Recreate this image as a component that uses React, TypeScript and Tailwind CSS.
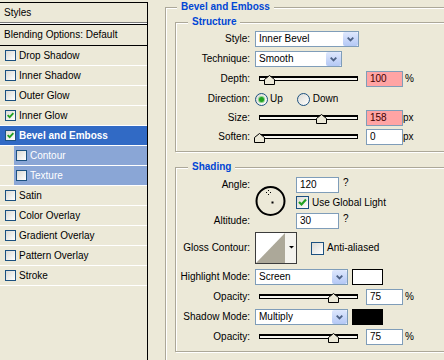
import React from 'react';
import clsx from 'clsx';

const styleRows: { name: string; checked?: boolean; sel?: 'main' | 'sub' }[] = [
  { name: 'Drop Shadow' },
  { name: 'Inner Shadow' },
  { name: 'Outer Glow' },
  { name: 'Inner Glow', checked: true },
  { name: 'Bevel and Emboss', checked: true, sel: 'main' },
  { name: 'Contour', sel: 'sub' },
  { name: 'Texture', sel: 'sub' },
  { name: 'Satin' },
  { name: 'Color Overlay' },
  { name: 'Gradient Overlay' },
  { name: 'Pattern Overlay' },
  { name: 'Stroke' },
];

const CheckBox = ({ small, checked }: { small?: boolean; checked?: boolean }) => (
  <span
    className={clsx(
      'flex shrink-0 items-center justify-center border border-[#1c5180] bg-linear-to-br from-[#dcdbd5] to-white',
      small ? 'h-[11px] w-[11px]' : 'h-[13px] w-[13px]'
    )}
  >
    {checked && (
      <svg width={small ? 9 : 11} height={small ? 9 : 11} viewBox="0 0 11 11">
        <path d="M2 5 L4.5 7.5 L9 2.5" stroke="#21a121" strokeWidth="2.2" fill="none" />
      </svg>
    )}
  </span>
);

const Radio = ({ on }: { on?: boolean }) => (
  <span className="flex h-[13px] w-[13px] shrink-0 items-center justify-center rounded-full border border-[#1c5180] bg-linear-to-br from-[#dcdbd5] to-white">
    {on && <span className="h-[5px] w-[5px] rounded-full bg-[#21a121] shadow-[0_0_0_1px_#8fd28f]" />}
  </span>
);

const Select = ({ value, w }: { value: string; w: string }) => (
  <div className={clsx('flex h-[16px] shrink-0 items-center border border-[#7f9db9] bg-white', w)}>
    <span className="flex-1 pl-[3px] leading-[14px]">{value}</span>
    <span className="flex h-[14px] w-[15px] items-center justify-center rounded-[2px] bg-linear-to-b from-[#dfe8fd] to-[#b4c8f5]">
      <svg width="7" height="5" viewBox="0 0 7 5">
        <path d="M0.7 0.7 L3.5 3.5 L6.3 0.7" stroke="#4d6185" strokeWidth="1.8" fill="none" />
      </svg>
    </span>
  </div>
);

const Field = ({ value, pink, wide }: { value: string; pink?: boolean; wide?: boolean }) => (
  <div
    className={clsx(
      'h-[16px] shrink-0 border border-[#7f9db9] pl-[3px] leading-[14px]',
      wide ? 'w-[43px]' : 'w-[37px]',
      pink ? 'bg-[#ffa4a4] text-[#400000]' : 'bg-white'
    )}
  >
    {value}
  </div>
);

const Slider = ({ pct }: { pct: number }) => (
  <div className="relative ml-[4px] h-[12px] w-[99px] shrink-0">
    <div className="mt-[3px] h-[5px] border border-t-2 border-black bg-[#f6f5ef]" />
    <svg
      className="absolute top-[2px]"
      style={{ left: Math.round((pct * 98) / 100) - 5 }}
      width="11"
      height="10"
      viewBox="0 0 11 10"
    >
      <polygon points="0.5,9.5 0.5,4.5 5.5,0.5 10.5,4.5 10.5,9.5" fill="#ece9d8" stroke="#000" />
    </svg>
  </div>
);

const Label = ({ children }: { children: React.ReactNode }) => (
  <span className="w-[74px] shrink-0 text-right">{children}</span>
);

const Title = ({ children, ml }: { children: React.ReactNode; ml: string }) => (
  <div className={clsx('-mt-[7px] h-[12px] w-fit bg-[#ece9d8] px-[4px] font-bold leading-[12px] text-[#0046d5]', ml)}>
    {children}
  </div>
);

const groupBox = 'border border-[#aca899] shadow-[inset_1px_1px_0_#fff,1px_1px_0_#fff]';

export default function App() {
  return (
    <div className="flex h-[360px] w-[444px] overflow-hidden bg-[#ece9d8] font-['Liberation_Sans',Arial,sans-serif] text-[10px] leading-[12px] text-black">
      {/* styles list */}
      <div className="mt-[2px] flex h-[358px] w-[148px] shrink-0 flex-col border-t border-r border-black">
        <div className="flex h-[20px] items-center border-b border-[#7a7a7a] pl-[4px]">Styles</div>
        <div className="h-[2px] border-b border-black bg-white" />
        <div className="flex h-[21px] items-center border-b border-black pl-[4px]">Blending Options: Default</div>
        {styleRows.map((r) =>
          r.sel === 'sub' ? (
            <div key={r.name} className="flex h-[20px] border-b border-white pl-[14px]">
              <div className="flex flex-1 items-center bg-[#8aa6d6] text-white">
                <span className="ml-[2px]">
                  <CheckBox small />
                </span>
                <span className="ml-[3px]">{r.name}</span>
              </div>
            </div>
          ) : (
            <div
              key={r.name}
              className={clsx(
                'flex h-[20px] items-center border-b border-white',
                r.sel === 'main' && 'bg-[#316ac5] font-bold text-white'
              )}
            >
              <span className="ml-[5px]">
                <CheckBox small checked={r.checked} />
              </span>
              <span className="ml-[3px]">{r.name}</span>
            </div>
          )
        )}
      </div>

      {/* Bevel and Emboss */}
      <div className={clsx('ml-[17px] mt-[7px] h-[400px] w-[320px] shrink-0', groupBox)}>
        <Title ml="ml-[11px]">Bevel and Emboss</Title>

        <div className={clsx('ml-[9px] mt-[9px] w-[300px] pb-[4px]', groupBox)}>
          <Title ml="ml-[12px]">Structure</Title>
          <div className="mt-[1px] flex h-[20px] items-center">
            <Label>Style:</Label>
            <span className="ml-[5px]">
              <Select value="Inner Bevel" w="w-[104px]" />
            </span>
          </div>
          <div className="flex h-[20px] items-center">
            <Label>Technique:</Label>
            <span className="ml-[5px]">
              <Select value="Smooth" w="w-[87px]" />
            </span>
          </div>
          <div className="flex h-[20px] items-center">
            <Label>Depth:</Label>
            <span className="ml-[5px]" />
            <Slider pct={10} />
            <span className="ml-[8px]">
              <Field value="100" pink />
            </span>
            <span className="ml-[2px]">%</span>
          </div>
          <div className="flex h-[20px] items-center">
            <Label>Direction:</Label>
            <span className="ml-[5px]">
              <Radio on />
            </span>
            <span className="ml-[2px]">Up</span>
            <span className="ml-[14px]">
              <Radio />
            </span>
            <span className="ml-[3px]">Down</span>
          </div>
          <div className="flex h-[18px] items-center">
            <Label>Size:</Label>
            <span className="ml-[5px]" />
            <Slider pct={63} />
            <span className="ml-[8px]">
              <Field value="158" pink />
            </span>
            <span>px</span>
          </div>
          <div className="flex h-[20px] items-center">
            <Label>Soften:</Label>
            <span className="ml-[5px]" />
            <Slider pct={0} />
            <span className="ml-[8px]">
              <Field value="0" />
            </span>
            <span>px</span>
          </div>
        </div>

        <div className={clsx('ml-[9px] mt-[15px] w-[300px] pb-[4px]', groupBox)}>
          <Title ml="ml-[12px]">Shading</Title>

          <div className="mt-[4px] flex">
            <div className="flex h-[52px] w-[74px] shrink-0 flex-col justify-between text-right">
              <span className="leading-[16px]">Angle:</span>
              <span className="leading-[16px]">Altitude:</span>
            </div>
            <svg className="ml-[5px] mt-[8px] shrink-0" width="32" height="32" viewBox="0 0 32 32">
              <circle cx="15.5" cy="16" r="14" fill="none" stroke="#000" strokeWidth="2" />
              <rect x="13" y="5" width="1" height="1" fill="#000" />
              <rect x="13" y="9" width="1" height="1" fill="#000" />
              <rect x="11" y="7" width="1" height="1" fill="#000" />
              <rect x="15" y="7" width="1" height="1" fill="#000" />
              <rect x="16.5" y="16.5" width="2" height="2" fill="#000" />
            </svg>
            <div className="ml-[9px] flex flex-col">
              <div className="flex">
                <Field value="120" wide />
                <span className="ml-[4px]">?</span>
              </div>
              <div className="mt-[3px] flex h-[13px] items-center">
                <CheckBox checked />
                <span className="ml-[3px]">Use Global Light</span>
              </div>
              <div className="mt-[4px] flex">
                <Field value="30" wide />
                <span className="ml-[4px]">?</span>
              </div>
            </div>
          </div>

          <div className="mt-[3px] flex h-[32px] items-center">
            <Label>Gloss Contour:</Label>
            <svg className="ml-[5px] shrink-0" width="42" height="32" viewBox="0 0 42 32">
              <rect x="0.5" y="0.5" width="41" height="31" fill="#f4f3ee" stroke="#3c3c3c" />
              <rect x="1" y="1" width="29" height="30" fill="#fff" />
              <polygon points="1,31 30,1 30,31" fill="#aca899" />
              <polygon points="34,14 39,14 36.5,16.5" fill="#000" />
            </svg>
            <span className="ml-[14px]">
              <CheckBox />
            </span>
            <span className="ml-[3px]">Anti-aliased</span>
          </div>

          <div className="mt-[3px] flex h-[20px] items-center">
            <Label>Highlight Mode:</Label>
            <span className="ml-[5px]">
              <Select value="Screen" w="w-[93px]" />
            </span>
            <span className="ml-[4px] h-[16px] w-[31px] border border-black bg-white" />
          </div>
          <div className="flex h-[20px] items-center">
            <Label>Opacity:</Label>
            <span className="ml-[5px]" />
            <Slider pct={75} />
            <span className="ml-[8px]">
              <Field value="75" />
            </span>
            <span className="ml-[2px]">%</span>
          </div>
          <div className="flex h-[20px] items-center">
            <Label>Shadow Mode:</Label>
            <span className="ml-[5px]">
              <Select value="Multiply" w="w-[93px]" />
            </span>
            <span className="ml-[4px] h-[16px] w-[31px] border border-black bg-black" />
          </div>
          <div className="flex h-[20px] items-center">
            <Label>Opacity:</Label>
            <span className="ml-[5px]" />
            <Slider pct={75} />
            <span className="ml-[8px]">
              <Field value="75" />
            </span>
            <span className="ml-[2px]">%</span>
          </div>
        </div>
      </div>
    </div>
  );
}
